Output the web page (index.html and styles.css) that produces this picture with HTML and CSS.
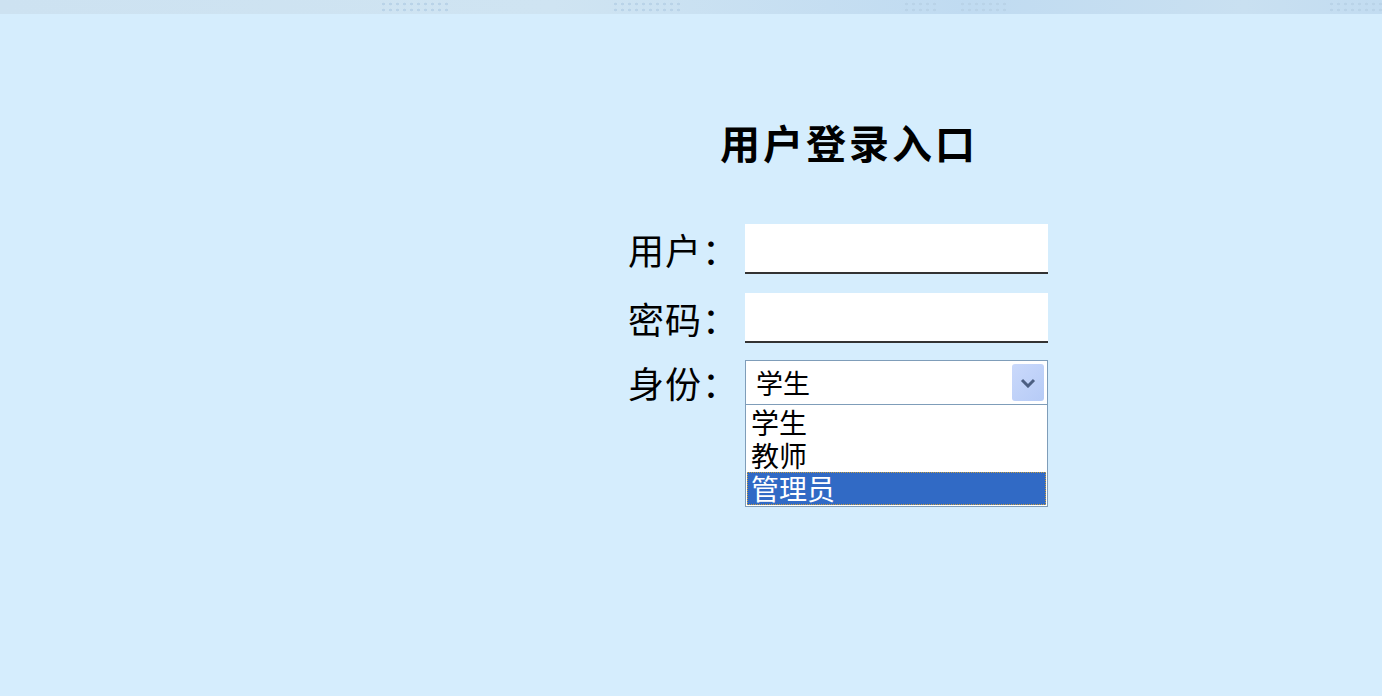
FILE: index.html
```html
<!DOCTYPE html>
<html lang="zh-CN">
  <head>
    <meta charset="UTF-8" />
    <title>用户登录入口</title>
    <link rel="stylesheet" href="styles.css">
  </head>
  <body>
    <div class="banner">
      <span class="dots dots-a"></span>
      <span class="dots dots-b"></span>
      <span class="dots dots-c"></span>
      <span class="dots dots-d"></span>
      <span class="dots dots-e"></span>
    </div>

    <div class="login">
      <h1 class="title">用户登录入口</h1>
      <div class="form">
        <div class="row">
          <span class="label">用户：</span>
          <input class="field" type="text" />
        </div>
        <div class="row">
          <span class="label">密码：</span>
          <input class="field" type="password" />
        </div>
        <div class="row row-select">
          <span class="label label-select">身份：</span>
          <div class="select">
            <div class="select-box">
              <span class="select-value">学生</span>
              <span class="select-btn">
                <svg width="16" height="10" viewBox="0 0 16 10">
                  <path d="M2 2 L8 8 L14 2" fill="none" stroke="#4c5f82" stroke-width="3" />
                </svg>
              </span>
            </div>
            <div class="options">
              <div class="option">学生</div>
              <div class="option">教师</div>
              <div class="option option-active">管理员</div>
            </div>
          </div>
        </div>
      </div>
    </div>
  </body>
</html>
```

FILE: styles.css
```css
body {
  margin: 0;
  background: #d5edfd;
  font-family: "Noto Sans CJK SC", "Noto Sans", sans-serif;
  color: #000;
}
.banner {
  height: 14px;
  background: linear-gradient(to right, #cde2f1 0%, #cfe4f2 40%, #c0dbf1 70%, #c9e0f1 90%, #c2dcf1 100%);
  display: flex;
  overflow: hidden;
}
.dots {
  display: block;
  height: 14px;
  background-image: radial-gradient(circle, #b9d3e8 1.2px, transparent 1.6px);
  background-size: 7px 6px;
  background-position: 0 1px;
}
.dots-a {
  width: 80px;
  margin-left: 380px;
}
.dots-b {
  width: 80px;
  margin-left: 160px;
}
.dots-c {
  width: 40px;
  margin-left: 220px;
}
.dots-d {
  width: 55px;
  margin-left: 20px;
}
.dots-e {
  width: 60px;
  margin-left: 320px;
}
.login {
  width: 440px;
  margin-left: 628px;
}
.title {
  margin: 100px 0 0;
  padding-left: 92px;
  font-size: 40px;
  line-height: 56px;
  letter-spacing: 3px;
  font-weight: bold;
}
.form {
  margin-top: 54px;
  display: flex;
  flex-direction: column;
}
.row {
  display: flex;
  align-items: center;
  height: 50px;
  margin-bottom: 19px;
}
.row-select {
  height: auto;
  align-items: flex-start;
  margin-top: -2px;
}
.label {
  width: 117px;
  font-size: 36px;
  line-height: 40px;
  letter-spacing: 1px;
}
.label-select {
  line-height: 45px;
}
.field {
  box-sizing: border-box;
  width: 303px;
  height: 50px;
  margin: 0;
  border: none;
  border-bottom: 2px solid #333;
  background: #fff;
  outline: none;
}
.select {
  width: 303px;
}
.select-box {
  box-sizing: border-box;
  height: 45px;
  border: 1px solid #7f9db9;
  background: #fff;
  display: flex;
  align-items: center;
  justify-content: space-between;
  padding: 0 3px 0 10px;
}
.select-value {
  font-size: 27px;
  line-height: 36px;
}
.select-btn {
  width: 32px;
  height: 37px;
  border-radius: 3px;
  background: linear-gradient(135deg, #cad9fb 0%, #b6cbf6 100%);
  display: flex;
  align-items: center;
  justify-content: center;
}
.options {
  box-sizing: border-box;
  width: 303px;
  padding: 1px;
  border: 1px solid #7f9db9;
  border-top: none;
  background: #fff;
}
.option {
  height: 33px;
  padding-left: 4px;
  font-size: 28px;
  line-height: 33px;
}
.option-active {
  background: #316ac5;
  color: #fff;
  outline: 1px dotted #c8a040;
  outline-offset: -1px;
}
```
